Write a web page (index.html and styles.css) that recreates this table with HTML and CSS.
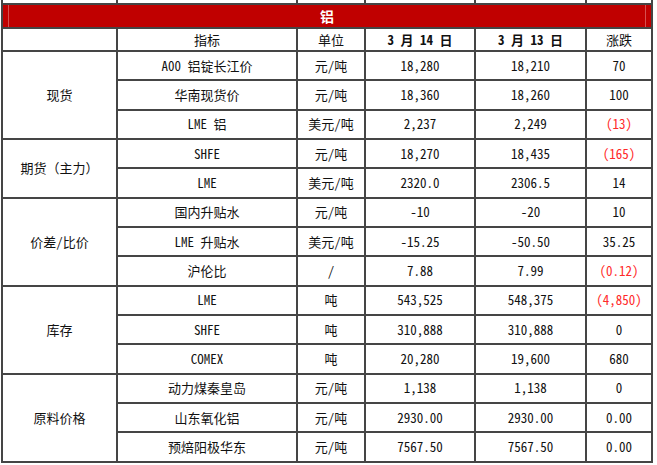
FILE: index.html
```html
<!DOCTYPE html>
<html lang="zh-CN">
<head>
<meta charset="utf-8">
<title>铝</title>
<link rel="stylesheet" href="styles.css">
</head>
<body>
<table class="sheet">
  <colgroup>
    <col class="c1"><col class="c2"><col class="c3"><col class="c4"><col class="c5"><col class="c6">
  </colgroup>
  <tr class="r-prev"><td></td><td></td><td></td><td></td><td></td><td></td></tr>
  <tr class="r-title"><td colspan="6" class="title"><div class="title-in">铝</div></td></tr>
  <tr class="r-head">
    <td></td><td>指标</td><td>单位</td><td class="date">3 月 14 日</td><td class="date">3 月 13 日</td><td>涨跌</td>
  </tr>
  <tr><td rowspan="3" class="grp">现货</td><td>A00 铝锭长江价</td><td>元/吨</td><td class="n">18,280</td><td class="n">18,210</td><td class="n">70</td></tr>
  <tr><td>华南现货价</td><td>元/吨</td><td class="n">18,360</td><td class="n">18,260</td><td class="n">100</td></tr>
  <tr><td><span class="lat">LME</span> 铝</td><td>美元/吨</td><td class="n">2,237</td><td class="n">2,249</td><td class="n neg">(13)</td></tr>
  <tr><td rowspan="2" class="grp">期货（主力）</td><td class="lat">SHFE</td><td>元/吨</td><td class="n">18,270</td><td class="n">18,435</td><td class="n neg">(165)</td></tr>
  <tr><td class="lat">LME</td><td>美元/吨</td><td class="n">2320.0</td><td class="n">2306.5</td><td class="n">14</td></tr>
  <tr><td rowspan="3" class="grp">价差/比价</td><td>国内升贴水</td><td>元/吨</td><td class="n">-10</td><td class="n">-20</td><td class="n">10</td></tr>
  <tr><td><span class="lat">LME</span> 升贴水</td><td>美元/吨</td><td class="n">-15.25</td><td class="n">-50.50</td><td class="n">35.25</td></tr>
  <tr><td>沪伦比</td><td>/</td><td class="n">7.88</td><td class="n">7.99</td><td class="n neg">(0.12)</td></tr>
  <tr><td rowspan="3" class="grp">库存</td><td class="lat">LME</td><td>吨</td><td class="n">543,525</td><td class="n">548,375</td><td class="n neg">(4,850)</td></tr>
  <tr><td class="lat">SHFE</td><td>吨</td><td class="n">310,888</td><td class="n">310,888</td><td class="n">0</td></tr>
  <tr><td class="lat">COMEX</td><td>吨</td><td class="n">20,280</td><td class="n">19,600</td><td class="n">680</td></tr>
  <tr><td rowspan="3" class="grp">原料价格</td><td>动力煤秦皇岛</td><td>元/吨</td><td class="n">1,138</td><td class="n">1,138</td><td class="n">0</td></tr>
  <tr><td>山东氧化铝</td><td>元/吨</td><td class="n">2930.00</td><td class="n">2930.00</td><td class="n">0.00</td></tr>
  <tr><td>预焙阳极华东</td><td>元/吨</td><td class="n">7567.50</td><td class="n">7567.50</td><td class="n">0.00</td></tr>
</table>
</body>
</html>
```
FILE: styles.css
```css
html, body {
  margin: 0;
  padding: 0;
  background: #ffffff;
}
.sheet {
  border-collapse: collapse;
  table-layout: fixed;
  width: 652px;
  margin: -7px 0 0 1px;
  font-family: "Noto Sans Mono CJK SC", "Noto Sans CJK SC", "Liberation Mono", monospace;
  font-size: 13px;
  font-weight: 500;
  color: #111111;
}
.c1 { width: 115px; }
.c2 { width: 180px; }
.c3 { width: 68px; }
.c4 { width: 110px; }
.c5 { width: 111px; }
.c6 { width: 66px; }
.sheet td {
  border: 2px solid #454545;
  padding: 0;
  text-align: center;
  vertical-align: middle;
  height: 27.35px;
  line-height: 16px;
  white-space: nowrap;
  overflow: hidden;
}
.sheet .r-prev td { height: 8px; }
.sheet .r-title td { height: 22px; }
.sheet .r-head td { height: 21px; }
.title {
  background: #c00000;
  color: #ffffff;
  font-weight: bold;
  font-size: 14px;
}
.title-in {
  margin: 0 5px;
  height: 22px;
  line-height: 22px;
  border-left: 1px solid #d65050;
  border-right: 1px solid #d65050;
}
.date { font-weight: bold; }
.lat { font-weight: 500; }
.n { font-weight: normal; }
.neg { color: #ff2a2a; }
```
